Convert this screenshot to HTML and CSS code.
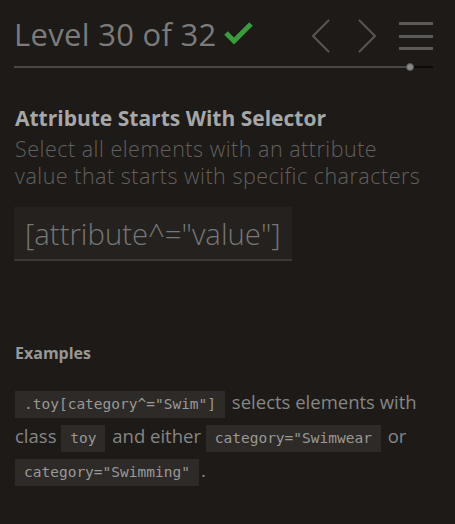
FILE: index.html
```html
<!DOCTYPE html>
<html>
<head>
<meta charset="utf-8">
<link rel="stylesheet" href="styles.css">
</head>
<body>
<div class="sidebar">
  <div class="header">
    <h1 class="level">Level 30 of 32
      <svg class="check" width="30" height="24" viewBox="0 0 30 24"><path d="M2 12 L10 20 L27 3" fill="none" stroke="#3a9b3d" stroke-width="5"/></svg>
    </h1>
    <div class="nav">
      <svg class="arrow" width="20" height="34" viewBox="0 0 20 34"><path d="M18 1 L2 17 L18 33" fill="none" stroke="#5a5855" stroke-width="2"/></svg>
      <svg class="arrow" width="20" height="34" viewBox="0 0 20 34"><path d="M2 1 L18 17 L2 33" fill="none" stroke="#5a5855" stroke-width="2"/></svg>
      <div class="menu"><span></span><span></span><span></span></div>
    </div>
  </div>
  <div class="progress">
    <div class="done"></div>
    <div class="dot"></div>
    <div class="rest"></div>
  </div>

  <h2 class="title">Attribute Starts With Selector</h2>
  <p class="desc">Select all elements with an attribute value that starts with specific characters</p>
  <div class="syntax">[attribute^="value"]</div>

  <h3 class="examples-title">Examples</h3>
  <p class="example"><code>.toy[category^="Swim"]</code> selects elements with class <code>toy</code> and either <code>category="Swimwear</code> or <code>category="Swimming"</code>.</p>
</div>
</body>
</html>
```

FILE: styles.css
```css
html, body {
  margin: 0;
  padding: 0;
  background: #1d1a17;
}
body {
  font-family: "Open Sans", "DejaVu Sans", sans-serif;
  color: #777;
}
.sidebar {
  width: 455px;
  padding: 12px 22px 0 14px;
  box-sizing: border-box;
}
.header {
  display: flex;
  justify-content: space-between;
  align-items: center;
  height: 44px;
}
.level {
  margin: 0;
  font-size: 31px;
  font-weight: 400;
  color: #7c7b7a;
  display: flex;
  align-items: center;
  gap: 7px;
  letter-spacing: 0.3px;
}
.check {
  display: block;
  margin-top: -2px;
}
.nav {
  display: flex;
  align-items: center;
  gap: 0;
  margin-top: 4px;
}
.arrow {
  display: block;
  margin-right: 26px;
}
.arrow + .arrow {
  margin-right: 22px;
}
.menu {
  display: flex;
  flex-direction: column;
  gap: 9.5px;
  width: 34px;
}
.menu span {
  display: block;
  height: 3px;
  background: #5b5a58;
}
.progress {
  display: flex;
  align-items: center;
  margin-top: 7px;
  height: 8px;
}
.done {
  width: 392px;
  height: 2px;
  background: #4a4845;
}
.dot {
  width: 6px;
  height: 6px;
  border-radius: 50%;
  background: #888;
  border: 1px solid #555;
}
.rest {
  flex: 1;
  height: 2px;
  background: #0e0c0a;
}
.title {
  margin: 33px 0 0 1px;
  font-size: 21px;
  font-weight: 700;
  color: #a7a7a7;
  letter-spacing: 0px;
}
.desc {
  width: 413px;
  margin: 3px 0 0 1px;
  font-size: 21.5px;
  font-weight: 300;
  line-height: 27px;
  color: #62605d;
  letter-spacing: 0.5px;
}
.syntax {
  display: inline-block;
  margin-top: 18px;
  padding: 7px 11px 5px 11px;
  font-size: 29.3px;
  font-weight: 300;
  color: #777;
  background: #24211e;
  border-bottom: 2px solid #3b3834;
}
.examples-title {
  margin: 81px 0 0 1px;
  font-size: 16px;
  font-weight: 700;
  color: #979797;
}
.example {
  margin: 21px 0 0 1px;
  font-size: 18.5px;
  line-height: 34px;
  color: #868685;
}
code {
  font-family: "DejaVu Sans Mono", monospace;
  font-size: 14.5px;
  line-height: 1;
  background: #2d2a27;
  color: #9a9997;
  padding: 5px 9px 6px 9px;
  margin: 0 2px 0 0;
}
```
